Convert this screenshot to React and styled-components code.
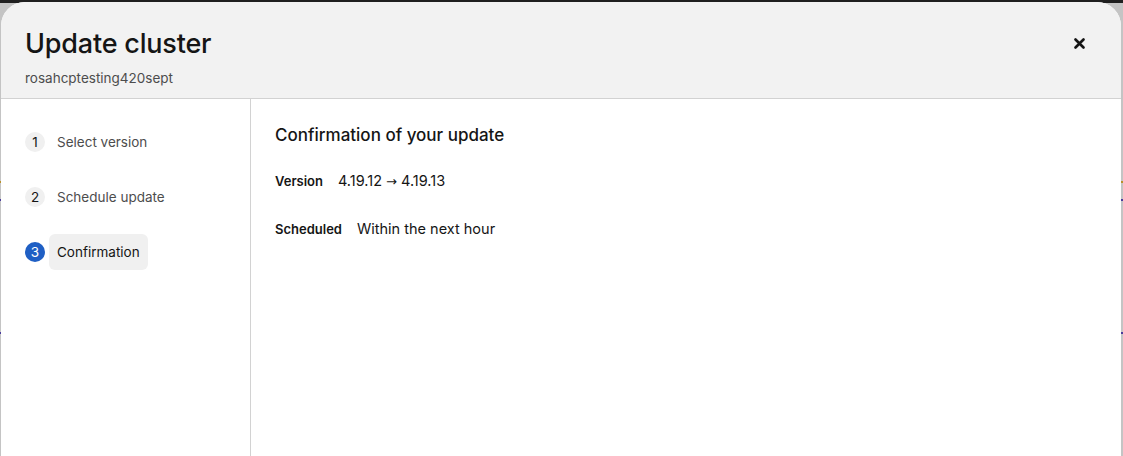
import React from "react";
import styled, { createGlobalStyle } from "styled-components";

const Global = createGlobalStyle`
  html, body { margin: 0; padding: 0; }
  body {
    font-family: "Inter", "Noto Sans", sans-serif;
    background: #c4c4c4;
    overflow: hidden;
  }
`;

const Backdrop = styled.div`
  height: 456px;
  display: flex;
  flex-direction: column;
  overflow: hidden;
  background:
    linear-gradient(#1f1f1f, #1f1f1f) top / 100% 3px no-repeat,
    linear-gradient(#b8912a, #b8912a) 0 181px / 1px 2px no-repeat,
    linear-gradient(#4a3c9c, #4a3c9c) 0 199px / 1px 2px no-repeat,
    linear-gradient(#4a3c9c, #4a3c9c) 0 332px / 1px 2px no-repeat,
    linear-gradient(#b8912a, #b8912a) 1121px 181px / 2px 2px no-repeat,
    linear-gradient(#4a3c9c, #4a3c9c) 1121px 199px / 2px 2px no-repeat,
    linear-gradient(#4a3c9c, #4a3c9c) 1121px 332px / 2px 2px no-repeat,
    #c4c4c4;
  padding-top: 2px;
`;

const Modal = styled.section`
  margin: 0 2px 0 1px;
  flex: 1;
  display: flex;
  flex-direction: column;
  background: #ffffff;
  border-radius: 24px 24px 0 0;
  overflow: hidden;
`;

const Header = styled.header`
  background: #f2f2f2;
  border-bottom: 1px solid #d2d2d2;
  height: 97px;
  box-sizing: border-box;
  padding: 24px 24px 0 24px;
  display: flex;
  justify-content: space-between;
  align-items: flex-start;
`;

const TitleBlock = styled.div`
  display: flex;
  flex-direction: column;
`;

const Title = styled.h1`
  margin: 0;
  font-family: "Inter", sans-serif;
  font-weight: 500;
  font-size: 27px;
  line-height: 36px;
  color: #151515;
  letter-spacing: -0.2px;
`;

const Subtitle = styled.div`
  margin-top: 6px;
  font-size: 13.5px;
  line-height: 20px;
  color: #4d4d4d;
`;

const CloseButton = styled.button`
  border: none;
  background: transparent;
  padding: 0;
  margin-top: 9px;
  margin-right: 10px;
  width: 16px;
  height: 16px;
  display: flex;
  align-items: center;
  justify-content: center;
  cursor: pointer;
`;

const Body = styled.div`
  flex: 1;
  display: grid;
  grid-template-columns: 250px 1fr;
`;

const Nav = styled.nav`
  border-right: 1px solid #d2d2d2;
  padding: 25px 0 0 24px;
  display: flex;
  flex-direction: column;
  gap: 19px;
`;

const Step = styled.div`
  display: flex;
  align-items: center;
  gap: 4px;
  height: 36px;
`;

const StepNumber = styled.span`
  width: 20px;
  height: 20px;
  border-radius: 50%;
  flex: none;
  display: flex;
  align-items: center;
  justify-content: center;
  font-size: 13.5px;
  background: ${(p) => (p.$current ? "#1f5fc4" : "#f0f0f0")};
  color: ${(p) => (p.$current ? "#ffffff" : "#151515")};
`;

const StepLabel = styled.span`
  padding: 0 8px;
  height: 36px;
  display: flex;
  align-items: center;
  border-radius: 6px;
  font-size: 13.5px;
  background: ${(p) => (p.$current ? "#f0f0f0" : "transparent")};
  color: ${(p) => (p.$current ? "#151515" : "#4d4d4d")};
`;

const Main = styled.main`
  padding: 24px 24px 0 24px;
`;

const Heading = styled.h2`
  margin: 0;
  font-size: 17px;
  font-weight: 500;
  line-height: 24px;
  color: #151515;
`;

const DetailList = styled.dl`
  margin: 25px 0 0 0;
  display: flex;
  flex-direction: column;
  gap: 31px;
`;

const DetailRow = styled.div`
  display: flex;
  align-items: baseline;
  gap: 15px;
`;

const Term = styled.dt`
  font-size: 13px;
  font-weight: 600;
  color: #151515;
`;

const Value = styled.dd`
  margin: 0;
  font-size: 14.5px;
  color: #151515;
`;

const Arrow = styled.span`
  font-family: "DejaVu Sans", sans-serif;
  font-size: 13px;
`;

const steps = [
  { n: 1, label: "Select version" },
  { n: 2, label: "Schedule update" },
  { n: 3, label: "Confirmation", current: true },
];

export default function App() {
  return (
    <>
      <Global />
      <Backdrop>
        <Modal>
          <Header>
            <TitleBlock>
              <Title>Update cluster</Title>
              <Subtitle>rosahcptesting420sept</Subtitle>
            </TitleBlock>
            <CloseButton aria-label="Close">
              <svg width="11" height="11" viewBox="0 0 11 11">
                <path d="M1.5 1.5 L9.5 9.5 M9.5 1.5 L1.5 9.5" stroke="#151515" strokeWidth="2.6" strokeLinecap="round" />
              </svg>
            </CloseButton>
          </Header>
          <Body>
            <Nav>
              {steps.map((s) => (
                <Step key={s.n}>
                  <StepNumber $current={s.current}>{s.n}</StepNumber>
                  <StepLabel $current={s.current}>{s.label}</StepLabel>
                </Step>
              ))}
            </Nav>
            <Main>
              <Heading>Confirmation of your update</Heading>
              <DetailList>
                <DetailRow>
                  <Term>Version</Term>
                  <Value>4.19.12 <Arrow>→</Arrow> 4.19.13</Value>
                </DetailRow>
                <DetailRow>
                  <Term>Scheduled</Term>
                  <Value>Within the next hour</Value>
                </DetailRow>
              </DetailList>
            </Main>
          </Body>
        </Modal>
      </Backdrop>
    </>
  );
}
